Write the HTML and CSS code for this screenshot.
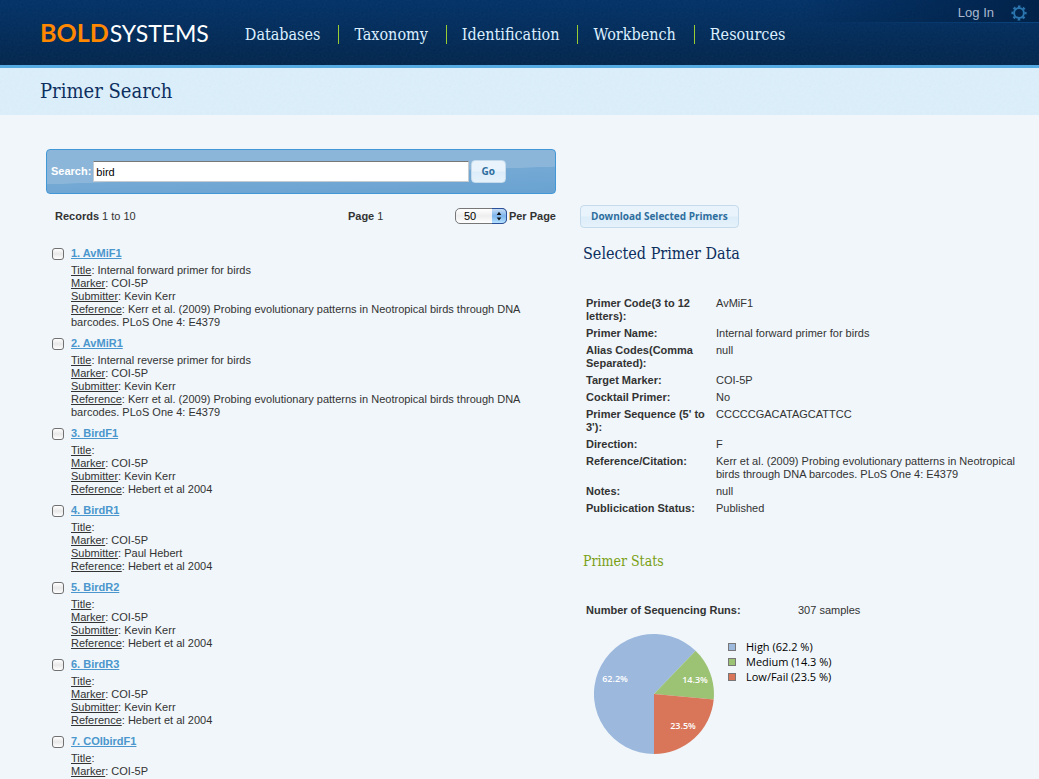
FILE: index.html
```html
<!DOCTYPE html>
<html lang="en">
<head>
<meta charset="utf-8">
<meta name="viewport" content="width=device-width, initial-scale=1">
<title>BOLD Systems: Primer Search</title>
<link rel="stylesheet" href="styles.css">
</head>
<body>
<header class="site-header">
  <a class="logo" href="#"><span class="logo-bold">BOLD</span><span>SYSTEMS</span></a>
  <nav class="main-nav">
    <a href="#">Databases</a>
    <a href="#">Taxonomy</a>
    <a href="#">Identification</a>
    <a href="#">Workbench</a>
    <a href="#">Resources</a>
  </nav>
  <div class="account">
    <a class="login" href="#">Log In</a>
    <a class="settings" href="#" aria-label="Settings">
      <svg width="16" height="16" viewBox="-8 -8 16 16" fill="none" stroke="#2c76b0">
        <circle r="4.9" stroke-width="2"/>
        <circle r="6.6" stroke-width="2" stroke-dasharray="2.6 2.584" stroke-dashoffset="1.3"/>
      </svg>
    </a>
  </div>
</header>
<div class="title-bar"><h1>Primer Search</h1></div>

<main class="content">
  <section class="results">
    <form class="search">
      <label for="q">Search:</label>
      <input id="q" type="text" value="bird">
      <button class="btn" type="button">Go</button>
    </form>
    <div class="pager">
      <span><b>Records</b> 1 to 10</span>
      <span><b>Page</b> 1</span>
      <span class="per-page">
        <span class="select-wrap">
          <select id="per"><option>50</option></select>
          <svg class="stepper" width="15" height="15" viewBox="0 0 15 15"><path d="M5 6.3L7.5 3L10 6.3ZM5 9L7.5 12.3L10 9Z" fill="#111"/></svg>
        </span>
        <label for="per"><b>Per Page</b></label>
      </span>
    </div>
    <ul class="records">
      <li><input type="checkbox" id="r1" aria-label="Select AvMiF1"><div><h2><a href="#">1. AvMiF1</a></h2>
        <p><u>Title</u>: Internal forward primer for birds</p><p><u>Marker</u>: COI-5P</p><p><u>Submitter</u>: Kevin Kerr</p><p><u>Reference</u>: Kerr et al. (2009) Probing evolutionary patterns in Neotropical birds through DNA barcodes. PLoS One 4: E4379</p></div></li>
      <li><input type="checkbox" id="r2" aria-label="Select AvMiR1"><div><h2><a href="#">2. AvMiR1</a></h2>
        <p><u>Title</u>: Internal reverse primer for birds</p><p><u>Marker</u>: COI-5P</p><p><u>Submitter</u>: Kevin Kerr</p><p><u>Reference</u>: Kerr et al. (2009) Probing evolutionary patterns in Neotropical birds through DNA barcodes. PLoS One 4: E4379</p></div></li>
      <li><input type="checkbox" id="r3" aria-label="Select BirdF1"><div><h2><a href="#">3. BirdF1</a></h2>
        <p><u>Title</u>:</p><p><u>Marker</u>: COI-5P</p><p><u>Submitter</u>: Kevin Kerr</p><p><u>Reference</u>: Hebert et al 2004</p></div></li>
      <li><input type="checkbox" id="r4" aria-label="Select BirdR1"><div><h2><a href="#">4. BirdR1</a></h2>
        <p><u>Title</u>:</p><p><u>Marker</u>: COI-5P</p><p><u>Submitter</u>: Paul Hebert</p><p><u>Reference</u>: Hebert et al 2004</p></div></li>
      <li><input type="checkbox" id="r5" aria-label="Select BirdR2"><div><h2><a href="#">5. BirdR2</a></h2>
        <p><u>Title</u>:</p><p><u>Marker</u>: COI-5P</p><p><u>Submitter</u>: Kevin Kerr</p><p><u>Reference</u>: Hebert et al 2004</p></div></li>
      <li><input type="checkbox" id="r6" aria-label="Select BirdR3"><div><h2><a href="#">6. BirdR3</a></h2>
        <p><u>Title</u>:</p><p><u>Marker</u>: COI-5P</p><p><u>Submitter</u>: Kevin Kerr</p><p><u>Reference</u>: Hebert et al 2004</p></div></li>
      <li><input type="checkbox" id="r7" aria-label="Select COIbirdF1"><div><h2><a href="#">7. COIbirdF1</a></h2>
        <p><u>Title</u>:</p><p><u>Marker</u>: COI-5P</p></div></li>
    </ul>
  </section>

  <section class="detail">
    <button class="btn" type="button">Download Selected Primers</button>
    <h2 class="detail-title">Selected Primer Data</h2>
    <table class="data">
      <tr><th scope="row">Primer Code(3 to 12 letters):</th><td>AvMiF1</td></tr>
      <tr><th scope="row">Primer Name:</th><td>Internal forward primer for birds</td></tr>
      <tr><th scope="row">Alias Codes(Comma Separated):</th><td>null</td></tr>
      <tr><th scope="row">Target Marker:</th><td>COI-5P</td></tr>
      <tr><th scope="row">Cocktail Primer:</th><td>No</td></tr>
      <tr><th scope="row">Primer Sequence (5' to 3'):</th><td>CCCCCGACATAGCATTCC</td></tr>
      <tr><th scope="row">Direction:</th><td>F</td></tr>
      <tr><th scope="row">Reference/Citation:</th><td>Kerr et al. (2009) Probing evolutionary patterns in Neotropical birds through DNA barcodes. PLoS One 4: E4379</td></tr>
      <tr><th scope="row">Notes:</th><td>null</td></tr>
      <tr><th scope="row">Publicication Status:</th><td>Published</td></tr>
    </table>
    <h3 class="stats-title">Primer Stats</h3>
    <table class="data stats">
      <tr><th scope="row">Number of Sequencing Runs:</th><td>307 samples</td></tr>
    </table>
    <div class="chart">
      <svg class="pie" width="120" height="120" viewBox="-60 -60 120 120" role="img" aria-label="Sequencing quality">
        <path d="M0 0V60A60 60 0 1 1 41.6 -43.2Z" fill="#9cb8dd"/>
        <path d="M0 0L41.6 -43.2A60 60 0 0 1 59.7 5.6Z" fill="#9cc274"/>
        <path d="M0 0L59.7 5.6A60 60 0 0 1 0 60Z" fill="#d97559"/>
        <g class="pie-label"><text x="-39" y="-12">62.2%</text><text x="41" y="-11">14.3%</text><text x="29" y="35">23.5%</text></g>
      </svg>
      <ul class="legend">
        <li class="high">High (62.2 %)</li>
        <li class="medium">Medium (14.3 %)</li>
        <li class="low">Low/Fail (23.5 %)</li>
      </ul>
    </div>
  </section>
</main>
</body>
</html>
```
FILE: styles.css
```css
* { box-sizing: border-box; }

body {
  margin: 0;
  background: #f0f6fa;
  color: #333;
  font: 11px/13px "Liberation Sans", Arial, sans-serif;
}

h1, h2, h3, p, ul { margin: 0; padding: 0; }
ul { list-style: none; }

.site-header {
  position: relative;
  display: flex;
  align-items: center;
  height: 68px;
  padding: 3px 24px 0 40px;
  border-bottom: 3px solid #55aae2;
  background:
    url("data:image/svg+xml,%3Csvg xmlns='http://www.w3.org/2000/svg' width='120' height='120'%3E%3Cfilter id='n'%3E%3CfeTurbulence type='fractalNoise' baseFrequency='.5' numOctaves='2' stitchTiles='stitch'/%3E%3CfeColorMatrix type='saturate' values='0'/%3E%3C/filter%3E%3Crect width='120' height='120' filter='url(%23n)' opacity='.06'/%3E%3C/svg%3E"),
    linear-gradient(#003067, #00244b);
}

.logo {
  display: flex;
  align-items: baseline;
  gap: 1px;
  padding-bottom: 4px;
  color: #fff;
  font: 23px/28px Lato, sans-serif;
  text-decoration: none;
}
.logo-bold { color: #f80; font-size: 25px; font-weight: 700; }

.main-nav { display: flex; margin-left: 36px; }
.main-nav a {
  color: #dcefff;
  font: 16px/19px "DejaVu Serif Condensed", "DejaVu Serif", serif;
  text-decoration: none;
}
.main-nav a + a {
  margin-left: 18px;
  padding-left: 15px;
  border-left: 1px solid #9c3;
}

.account {
  position: absolute;
  top: 0;
  right: 0;
  display: flex;
  justify-content: flex-end;
  align-items: center;
  gap: 17px;
  width: 240px;
  height: 23px;
  padding: 3px 12px 0 0;
  border-bottom: 1px solid;
  border-image: linear-gradient(90deg, transparent, #0a4580) 1;
  background: linear-gradient(90deg, rgba(0, 30, 66, 0), rgba(0, 30, 66, 0.8));
}
.login { color: #a9b8cf; font-size: 13px; text-decoration: none; }
.settings { display: flex; }

.title-bar {
  padding: 8px 40px 9px;
  background:
    url("data:image/svg+xml,%3Csvg xmlns='http://www.w3.org/2000/svg' width='120' height='120'%3E%3Cfilter id='n'%3E%3CfeTurbulence type='fractalNoise' baseFrequency='.4' numOctaves='2' stitchTiles='stitch'/%3E%3CfeColorMatrix type='saturate' values='0'/%3E%3C/filter%3E%3Crect width='120' height='120' filter='url(%23n)' opacity='.05'/%3E%3C/svg%3E"),
    #dbeffb;
}
.title-bar h1, .detail-title, .stats-title {
  color: #0d2f60;
  font-family: "DejaVu Serif Condensed", "DejaVu Serif", serif;
  font-weight: 400;
}
.title-bar h1 { font-size: 20px; line-height: 30px; }

.content {
  display: grid;
  grid-template-columns: 510fr 447fr;
  gap: 24px;
  padding: 34px 12px 0 46px;
}

.search {
  display: flex;
  align-items: center;
  gap: 2px;
  height: 45px;
  padding: 0 49px 0 4px;
  border: 1px solid #4297d7;
  border-radius: 4px;
  background: linear-gradient(178deg, #8cb6d9 0 56%, #74a9d4 57%, #69a2d1);
  color: #fff;
  font-weight: 700;
}
.search input {
  flex: 1;
  min-width: 0;
  height: 21px;
  padding: 0 2px;
  border: 1px solid #c4ccd2;
  border-top-color: #777;
  background: #fff;
  color: #000;
  font: 11px/13px "Liberation Sans", Arial, sans-serif;
}

.btn {
  height: 23px;
  padding: 0 10px;
  border: 1px solid #c5dbec;
  border-radius: 4px;
  background: linear-gradient(#e8f3fb 0 48%, #dcedf9 52%, #e6f2fb);
  color: #2e6e9e;
  font: 700 10px/13px "Open Sans", sans-serif;
}

.pager {
  display: grid;
  grid-template-columns: 293fr 107fr 101fr;
  align-items: center;
  height: 16px;
  margin-top: 14px;
  padding-left: 9px;
}
.per-page { display: flex; align-items: center; gap: 2px; white-space: nowrap; }
.select-wrap { position: relative; display: flex; }
.select-wrap select {
  width: 52px;
  height: 16px;
  padding: 0 8px;
  border: 1px solid #777;
  border-radius: 5px;
  appearance: none;
  background: linear-gradient(#fff, #eee 50%, #fff);
  color: #000;
  font: 11px/13px "Liberation Sans", Arial, sans-serif;
}
.stepper {
  position: absolute;
  top: 0;
  right: 0;
  height: 16px;
  border: 1px solid #2b4f9a;
  border-left: 0;
  border-radius: 0 5px 5px 0;
  background: linear-gradient(#c5ddf5, #7db4ec 50%, #b5e2ff);
  pointer-events: none;
}

.records { margin-top: 23px; padding: 0 20px 0 6px; }
.records li { display: flex; gap: 7px; margin-bottom: 8px; }
.records h2 { margin-bottom: 4px; font-size: 11px; line-height: 13px; }
.records h2 a { color: #4b97cd; }
.records input {
  flex: none;
  width: 12px;
  height: 12px;
  margin: 1px 0 0;
  border: 1px solid #707070;
  border-radius: 3px;
  appearance: none;
  background: linear-gradient(#fff, #e8e8e8 50%, #fff);
}

.detail { padding-top: 56px; }
.detail .btn { display: block; }
.detail-title { margin: 13px 3px 0; font-size: 16px; line-height: 26px; }

.data { margin: 28px 0 0 4px; border-spacing: 0; }
.data th, .data td { padding: 2px; text-align: left; vertical-align: top; }
.data th { width: 130px; }
.stats-title { margin: 34px 3px 0; color: #7a9f12; font-size: 14px; line-height: 20px; }
.stats { margin-top: 31px; }
.stats th { width: 212px; }

.chart { display: flex; gap: 14px; padding: 15px 0 0 14px; }
.pie { flex: none; }
.pie-label {
  fill: #fff;
  font: 600 9px "Open Sans", sans-serif;
  text-anchor: middle;
}
.legend { padding-top: 5px; color: #000; font: 11px/15px "Open Sans", sans-serif; }
.legend li { display: flex; align-items: center; gap: 10px; }
.legend li::before {
  content: "";
  width: 6px;
  height: 6px;
  border: 1px solid #777;
}
.high::before { background: #9cb8dd; }
.medium::before { background: #9cc274; }
.low::before { background: #d97559; }
```
